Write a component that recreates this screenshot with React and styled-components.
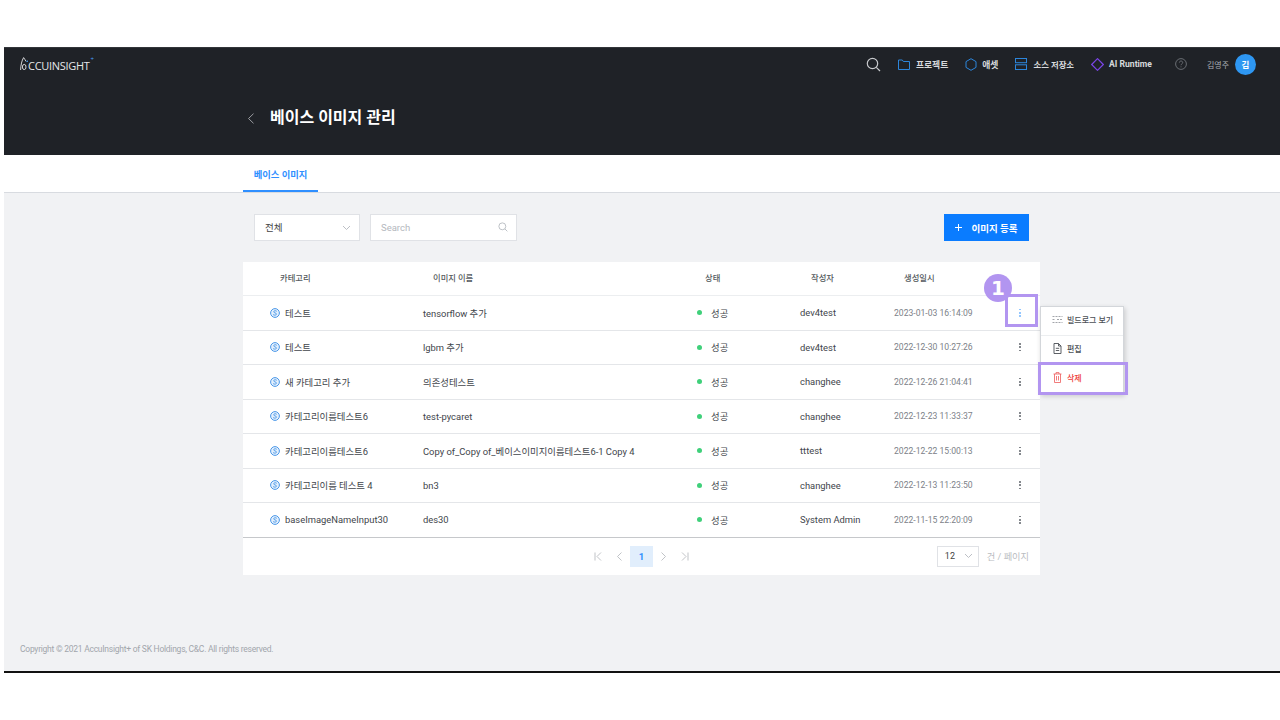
import React from "react";
import styled, { createGlobalStyle } from "styled-components";

const Global = createGlobalStyle`
  html, body { margin: 0; padding: 0; background: #fff; }
  body { font-family: Roboto, "Noto Sans CJK KR", sans-serif; }
  * { box-sizing: border-box; }
`;

const Page = styled.div`
  width: 1280px; height: 720px; padding: 47px 0 0 4px; background: #fff; overflow: hidden;
`;
const Frame = styled.div`
  width: 1276px; height: 626px; display: flex; flex-direction: column;
  background: #f1f2f4; border-bottom: 2px solid #111; position: relative;
`;
const Header = styled.header`
  height: 108px; background: #1f2227; border-top: 1px solid #33363a;
  display: flex; flex-direction: column; flex: none;
`;
const TopBar = styled.div`
  height: 32px; display: flex; align-items: center; justify-content: space-between;
  padding: 0 24px 0 16px;
`;
const Logo = styled.div`
  display: flex; align-items: flex-end; color: #e6e7e9; font-size: 11px; letter-spacing: -0.3px; line-height: 8px;
  font-family: "Open Sans", sans-serif; position: relative; top: -1px;
  sup { color: #4aa3ff; font-size: 6px; line-height: 1; align-self: flex-start; margin: -1px 0 0 1px; }
`;
const Nav = styled.nav`
  display: flex; align-items: center;
`;
const NavItem = styled.div`
  display: flex; align-items: center; gap: ${p => p.$inner}px; color: #d8dadd; font-size: ${p => p.$fs || 8.8}px; font-weight: 700;
  margin-left: ${p => p.$gap}px; white-space: nowrap;
`;
const UserName = styled.span`
  color: #a9adb2; font-size: 8px; margin-left: 20px;
`;
const Avatar = styled.div`
  width: 21px; height: 21px; border-radius: 50%; background: #2e97f2; color: #fff;
  font-size: 8.5px; font-weight: 700; display: flex; align-items: center; justify-content: center; margin-left: 6px;
`;
const TitleRow = styled.div`
  display: flex; align-items: center; padding-left: 243px; height: 40px; margin-top: 18px;
`;
const Title = styled.h1`
  margin: 0 0 0 15px; color: #fff; font-size: 16px; font-weight: 700; line-height: 1;
`;
const Tabs = styled.div`
  height: 38px; background: #fff; border-bottom: 1px solid #d8dbe0; padding-left: 239px; flex: none;
`;
const Tab = styled.div`
  width: 75px; height: 37px; border-bottom: 2px solid #2f8fff; color: #2f8fff; font-size: 9.3px; font-weight: 700;
  display: flex; align-items: center; justify-content: center; padding-top: 2px;
`;
const Content = styled.main`
  width: 797px; margin-left: 239px; flex: 1; display: flex; flex-direction: column;
`;
const Toolbar = styled.div`
  display: flex; align-items: center; justify-content: space-between; padding: 21px 11px; height: 69px; flex: none;
`;
const Filters = styled.div`
  display: flex; gap: 10px;
`;
const SelectBox = styled.div`
  width: ${p => p.$w}px; height: ${p => p.$h}px; background: #fff; border: 1px solid #e0e2e6;
  display: flex; align-items: center; justify-content: space-between;
  padding: 0 ${p => p.$pr}px 1px ${p => p.$pl}px; color: #444; font-size: ${p => p.$fs}px;
`;
const Placeholder = styled.span`
  color: #b4b8be; font-size: 9.5px;
`;
const AddButton = styled.button`
  width: 85px; height: 27px; border: 0; background: #0a7cff; color: #fff; font-family: inherit;
  font-size: 9.5px; font-weight: 700; display: flex; align-items: center; justify-content: center; gap: 9px; padding: 0;
`;
const Table = styled.section`
  background: #fff; position: relative;
`;
const Grid = styled.div`
  display: grid; grid-template-columns: 180px 274px 103px 94px 108px 36px 2px; align-items: center;
`;
const HeadRow = styled(Grid)`
  height: 34px; border-bottom: 1px solid #eceef0; padding-bottom: 4px;
`;
const HeadCell = styled.div`
  padding-left: ${p => p.$pl}px; font-size: 8.3px; font-weight: 500; color: #555a60;
`;
const Row = styled(Grid)`
  height: 34.5px; border-bottom: 1px solid ${p => p.$last ? "#c6c8cb" : "#e4e6e9"}; font-size: 9.4px; color: #41454b;
`;
const CatCell = styled.div`
  display: flex; align-items: center; gap: 5px; padding-left: 27px; white-space: nowrap;
`;
const StatusCell = styled.div`
  display: flex; align-items: center; gap: 9px;
  &::before { content: ""; width: 5px; height: 5px; border-radius: 50%; background: #3fd07a; }
`;
const DateCell = styled.div`
  color: #7c8188; font-size: 8.6px; white-space: nowrap;
`;
const Kebab = styled.div`
  display: flex; flex-direction: column; gap: 1.5px; align-items: center; justify-content: center;
  span { width: 1.6px; height: 1.6px; border-radius: 50%; background: ${p => p.$active ? "#7fbcff" : "#6d7177"}; }
`;
const Pager = styled.div`
  height: 37px; display: flex; align-items: center; position: relative; padding-left: 345px;
`;
const PageIcons = styled.div`
  display: flex; align-items: center;
`;
const PageIcon = styled.div`
  width: 21px; height: 21px; display: flex; align-items: center; justify-content: center;
`;
const PageNum = styled.div`
  width: 23px; height: 21px; background: #e1eefc; color: #2f8fff; font-size: 9.5px; font-weight: 700;
  display: flex; align-items: center; justify-content: center;
`;
const PageSize = styled.div`
  position: absolute; right: 11px; top: 8px; display: flex; align-items: center; gap: 8px;
  color: #b9bcc1; font-size: 9.2px;
`;
const Footer = styled.footer`
  position: absolute; left: 16px; bottom: 17px; font-size: 8.5px; letter-spacing: -0.25px; color: #a2a6ac;
`;
const Menu = styled.div`
  position: absolute; left: 797px; top: 44px; width: 84px; background: #fff; border: 1px solid #d3d6da;
  box-shadow: 1px 2px 5px rgba(0,0,0,.18); z-index: 2;
`;
const MenuItem = styled.div`
  height: 28.5px; display: flex; align-items: center; gap: 4px; padding: 0 0 2px 11px; font-size: 8px; font-weight: 500;
  color: ${p => p.$danger ? "#ee3b3b" : "#4b4f55"}; border-bottom: ${p => p.$danger ? 0 : "1px solid #eceef0"};
`;
const Highlight = styled.div`
  position: absolute; left: ${p => p.$x}px; top: ${p => p.$y}px; width: ${p => p.$w}px; height: ${p => p.$h}px;
  border: 3px solid #b295f0; z-index: 3;
`;
const Badge = styled.div`
  position: absolute; left: 741px; top: 12px; width: 28px; height: 28px; border-radius: 50%; background: #b295f0;
  color: #fff; font-family: "DejaVu Sans", sans-serif; font-weight: 700; font-size: 20px; display: flex; align-items: center; justify-content: center; z-index: 4;
`;

const LogoMark = () => (
  <svg width="8" height="13" viewBox="0 0 8 13" fill="none" stroke="#e6e7e9" strokeWidth="0.9">
    <path d="M.6 13C.8 8 1.8 3.5 3.6.6 4.6 2 5.4 3.2 6 4.4" />
    <ellipse cx="4.2" cy="10" rx="1.8" ry="2.6" />
    <circle cx="7.2" cy="4.3" r="0.8" fill="#4aa3ff" stroke="none" />
  </svg>
);
const SearchIcon = ({ size = 15, color = "#c7c9cc", sw = 1.2 }) => (
  <svg width={size} height={size} viewBox="0 0 15 15" fill="none" stroke={color} strokeWidth={sw}>
    <circle cx="6.5" cy="6.5" r="5.2" /><path d="M10.3 10.3L14 14" />
  </svg>
);
const FolderIcon = () => (
  <svg width="12" height="11" viewBox="0 0 12 11" fill="none" stroke="#2c86dc" strokeWidth="1">
    <path d="M.5 1h3.8l1 1.5h6.2v8H.5z" />
  </svg>
);
const HexIcon = () => (
  <svg width="12" height="13" viewBox="0 0 12 13" fill="none" stroke="#2c86dc" strokeWidth="1">
    <path d="M6 .7l5 2.9v5.8l-5 2.9-5-2.9V3.6z" />
  </svg>
);
const RepoIcon = () => (
  <svg width="12" height="12" viewBox="0 0 12 12" fill="none" stroke="#2c86dc" strokeWidth="1">
    <rect x=".5" y=".5" width="11" height="4.2" /><rect x=".5" y="6.8" width="11" height="4.7" />
  </svg>
);
const DiamondIcon = () => (
  <svg width="13" height="13" viewBox="0 0 13 13" fill="none" stroke="#7a45e6" strokeWidth="1.2">
    <path d="M6.5.7l5.8 5.8-5.8 5.8L.7 6.5z" />
  </svg>
);
const HelpIcon = () => (
  <svg width="12" height="12" viewBox="0 0 12 12" fill="none" stroke="#71757a" strokeWidth="0.9">
    <circle cx="6" cy="6" r="5.4" />
    <path d="M4.4 4.6c0-2.1 3.3-2.1 3.3 0 0 1.3-1.7 1.3-1.7 2.6M6 8.4v.9" />
  </svg>
);
const Chevron = ({ color = "#b4b8be", size = 9 }) => (
  <svg width={size} height={size} viewBox="0 0 9 9" fill="none" stroke={color} strokeWidth="0.9"><path d="M1 3l3.5 3.5L8 3" /></svg>
);
const BackIcon = () => (
  <svg width="8" height="11" viewBox="0 0 8 11" fill="none" stroke="#9a9da1" strokeWidth="1"><path d="M6.5.7L1.5 5.5l5 4.8" /></svg>
);
const PagerArrow = ({ d }) => (
  <svg width="11" height="11" viewBox="0 0 11 11" fill="none" stroke="#b9bcc1" strokeWidth="0.9"><path d={d} /></svg>
);
const CatIcon = () => (
  <svg width="10" height="10" viewBox="0 0 10 10" fill="#e3effc" stroke="#4a97e8" strokeWidth="1">
    <circle cx="5" cy="5" r="4.4" />
    <path fill="none" strokeWidth="0.9" d="M6.8 3.3C5.8 2.4 3.7 2.6 3.7 3.8c0 1.3 2.8.9 2.8 2.3 0 1.2-2.3 1.4-3.4.5" />
  </svg>
);
const LogIcon = () => (
  <svg width="11" height="9" viewBox="0 0 11 9" fill="none" stroke="#8a8e94" strokeWidth="0.8">
    <path d="M.5 1.5h10M.5 4.5h3M5 4.5h5.5M.5 7.5h10" strokeDasharray="2 1" />
  </svg>
);
const DocIcon = () => (
  <svg width="11" height="11" viewBox="0 0 11 11" fill="none" stroke="#4b4f55" strokeWidth="0.9">
    <path d="M2 .5h4.5L9 3v7.5H2zM6.5.5V3H9M3.8 5.3h3.4M3.8 7.5h3.4" />
  </svg>
);
const TrashIcon = () => (
  <svg width="11" height="11" viewBox="0 0 11 11" fill="none" stroke="#ee5a5a" strokeWidth="0.8">
    <path d="M1.5 2h8M4 2V.6h3V2M2.5 2v8.5h6V2M4.5 4v4.5M6.5 4v4.5" />
  </svg>
);
const PlusIcon = () => (
  <svg width="7" height="7" viewBox="0 0 7 7" stroke="#fff" strokeWidth="1"><path d="M3.5 0v7M0 3.5h7" /></svg>
);

const rows = [
  ["테스트", "tensorflow 추가", "dev4test", "2023-01-03 16:14:09"],
  ["테스트", "lgbm 추가", "dev4test", "2022-12-30 10:27:26"],
  ["새 카테고리 추가", "의존성테스트", "changhee", "2022-12-26 21:04:41"],
  ["카테고리이름테스트6", "test-pycaret", "changhee", "2022-12-23 11:33:37"],
  ["카테고리이름테스트6", "Copy of_Copy of_베이스이미지이름테스트6-1 Copy 4", "tttest", "2022-12-22 15:00:13"],
  ["카테고리이름 테스트 4", "bn3", "changhee", "2022-12-13 11:23:50"],
  ["baseImageNameInput30", "des30", "System Admin", "2022-11-15 22:20:09"],
];

export default function App() {
  return (
    <Page>
      <Global />
      <Frame>
        <Header>
          <TopBar>
            <Logo><LogoMark />CCUINSIGHT<sup>+</sup></Logo>
            <Nav>
              <SearchIcon />
              <NavItem $gap={17} $inner={6}><FolderIcon />프로젝트</NavItem>
              <NavItem $gap={17} $inner={5}><HexIcon />애셋</NavItem>
              <NavItem $gap={17} $inner={6} $fs={8.4}><RepoIcon />소스 저장소</NavItem>
              <NavItem $gap={17} $inner={5} $fs={8.6}><DiamondIcon />AI Runtime</NavItem>
              <NavItem $gap={23} $inner={0}><HelpIcon /></NavItem>
              <UserName>김영주</UserName>
              <Avatar>김</Avatar>
            </Nav>
          </TopBar>
          <TitleRow>
            <BackIcon />
            <Title>베이스 이미지 관리</Title>
          </TitleRow>
        </Header>
        <Tabs><Tab>베이스 이미지</Tab></Tabs>
        <Content>
          <Toolbar>
            <Filters>
              <SelectBox $w={106} $h={27} $pl={10} $pr={8} $fs={9.5}>전체<Chevron /></SelectBox>
              <SelectBox $w={147} $h={27} $pl={10} $pr={8} $fs={9.5}>
                <Placeholder>Search</Placeholder><SearchIcon size={10} color="#b4b8be" sw={1.3} />
              </SelectBox>
            </Filters>
            <AddButton><PlusIcon />이미지 등록</AddButton>
          </Toolbar>
          <Table>
            <HeadRow>
              <HeadCell $pl={37}>카테고리</HeadCell>
              <HeadCell $pl={10}>이미지 이름</HeadCell>
              <HeadCell $pl={8}>상태</HeadCell>
              <HeadCell $pl={11}>작성자</HeadCell>
              <HeadCell $pl={10}>생성일시</HeadCell>
            </HeadRow>
            {rows.map((r, i) => (
              <Row key={i} $last={i === rows.length - 1}>
                <CatCell><CatIcon />{r[0]}</CatCell>
                <div>{r[1]}</div>
                <StatusCell>성공</StatusCell>
                <div>{r[2]}</div>
                <DateCell>{r[3]}</DateCell>
                <Kebab $active={i === 0}><span /><span /><span /></Kebab>
              </Row>
            ))}
            <Pager>
              <PageIcons>
                <PageIcon><PagerArrow d="M2 1.5v8M8 1.5L4 5.5l4 4" /></PageIcon>
                <PageIcon><PagerArrow d="M7.5 1.5l-4 4 4 4" /></PageIcon>
                <PageNum>1</PageNum>
                <PageIcon><PagerArrow d="M3.5 1.5l4 4-4 4" /></PageIcon>
                <PageIcon><PagerArrow d="M9 1.5v8M3 1.5l4 4-4 4" /></PageIcon>
              </PageIcons>
              <PageSize>
                <SelectBox $w={42} $h={21} $pl={7} $pr={5} $fs={9}>12<Chevron /></SelectBox>
                건 / 페이지
              </PageSize>
            </Pager>
            <Menu>
              <MenuItem><LogIcon />빌드로그 보기</MenuItem>
              <MenuItem><DocIcon />편집</MenuItem>
              <MenuItem $danger><TrashIcon />삭제</MenuItem>
            </Menu>
            <Highlight $x={762} $y={32} $w={33} $h={33} />
            <Highlight $x={795} $y={100} $w={90} $h={33} />
            <Badge>1</Badge>
          </Table>
        </Content>
        <Footer>Copyright © 2021 AccuInsight+ of SK Holdings, C&C. All rights reserved.</Footer>
      </Frame>
    </Page>
  );
}
